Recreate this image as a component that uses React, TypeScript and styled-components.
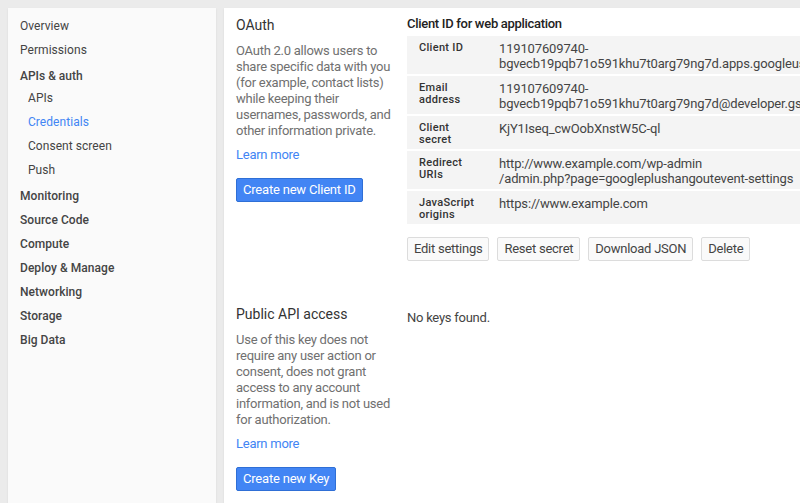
import React from "react";
import styled, { createGlobalStyle } from "styled-components";

const Global = createGlobalStyle`
  html, body { margin: 0; padding: 0; background: #ebebeb; overflow: hidden; }
  body { font-family: Roboto, "Liberation Sans", Arial, sans-serif; font-size: 13px; color: #444; }
  * { box-sizing: border-box; }
`;

const Page = styled.div`
  display: flex;
  gap: 8px;
  padding: 8px 0 0 8px;
  height: 503px;
  width: 800px;
  overflow: hidden;
`;

const Sidebar = styled.nav`
  width: 208px;
  flex: none;
  background: #fafafa;
  box-shadow: 0 1px 2px rgba(0, 0, 0, 0.08);
  padding-top: 6px;
`;

const NavItem = styled.div<{ $bold?: boolean; $sub?: boolean; $active?: boolean }>`
  height: 24px;
  line-height: 24px;
  padding-left: ${(p) => (p.$sub ? 20 : 12)}px;
  font-size: 12px;
  letter-spacing: 0.05px;
  font-weight: ${(p) => (p.$bold ? 500 : 400)};
  color: ${(p) => (p.$active ? "#4285f4" : "#444")};
  white-space: nowrap;
`;

const NavGroup = styled.div`
  margin: 2px 0;
`;

const NavHeader = styled.div`
  height: 22px;
  line-height: 20px;
  padding: 2px 0 0 12px;
  font-size: 12px;
  font-weight: 500;
  color: #444;
`;

const Main = styled.main`
  flex: 1;
  min-width: 0;
  background: #fff;
  box-shadow: 0 1px 2px rgba(0, 0, 0, 0.08);
  overflow: hidden;
  padding: 7px 0 0 12px;
`;

const Section = styled.section<{ $top?: number }>`
  display: grid;
  grid-template-columns: 160px 700px;
  column-gap: 11px;
  margin-top: ${(p) => p.$top ?? 0}px;
`;

const Intro = styled.div`
  display: flex;
  flex-direction: column;
  align-items: flex-start;
`;

const IntroTitle = styled.h2`
  margin: 0;
  font-size: 14px;
  line-height: 20px;
  font-weight: 400;
  color: #333;
`;

const IntroText = styled.p`
  margin: 8px 0 0;
  font-size: 13px;
  letter-spacing: -0.25px;
  line-height: 16px;
  color: #707070;
`;

const LearnMore = styled.a`
  margin-top: 8px;
  font-size: 13px;
  letter-spacing: -0.25px;
  line-height: 16px;
  color: #4285f4;
  text-decoration: none;
`;

const PrimaryButton = styled.button`
  margin-top: 15px;
  height: 24px;
  padding: 0 6px;
  border: 1px solid #2f6fd6;
  border-radius: 2px;
  background: #4285f4;
  color: #fff;
  font-family: inherit;
  font-size: 13px;
  letter-spacing: -0.2px;
  line-height: 22px;
`;

const Details = styled.div`
  padding-top: 1px;
`;

const DetailsTitle = styled.h3`
  margin: 0;
  font-size: 13px;
  letter-spacing: -0.3px;
  line-height: 16px;
  font-weight: 500;
  color: #222;
`;

const Table = styled.div`
  margin-top: 4px;
  display: flex;
  flex-direction: column;
  gap: 2px;
`;

const Row = styled.div`
  display: flex;
  align-items: flex-start;
  background: #f4f4f4;
  padding: 5px 12px 3px;
`;

const Label = styled.div`
  width: 80px;
  flex: none;
  margin-top: 1px;
  font-size: 11px;
  letter-spacing: 0.3px;
  line-height: 12px;
  font-weight: 500;
  color: #333;
`;

const Value = styled.div`
  font-size: 13px;
  letter-spacing: -0.15px;
  line-height: 15px;
  color: #444;
  white-space: nowrap;
`;

const Actions = styled.div`
  display: flex;
  gap: 8px;
  margin-top: 13px;
`;

const Button = styled.button`
  height: 24px;
  padding: 0 6px;
  border: 1px solid #dcdcdc;
  border-radius: 2px;
  background: #fafafa;
  color: #444;
  font-family: inherit;
  font-size: 13px;
  letter-spacing: -0.25px;
  line-height: 22px;
`;

const Empty = styled.div`
  padding-top: 5px;
  font-size: 13px;
  letter-spacing: -0.25px;
  line-height: 16px;
  color: #444;
`;

type Detail = { label: string[]; value: string[] };

const details: Detail[] = [
  {
    label: ["Client ID"],
    value: ["119107609740-", "bgvecb19pqb71o591khu7t0arg79ng7d.apps.googleusercontent.com"],
  },
  {
    label: ["Email", "address"],
    value: ["119107609740-", "bgvecb19pqb71o591khu7t0arg79ng7d@developer.gserviceaccount.com"],
  },
  { label: ["Client", "secret"], value: ["KjY1Iseq_cwOobXnstW5C-ql"] },
  {
    label: ["Redirect", "URIs"],
    value: ["http://www.example.com/wp-admin", "/admin.php?page=googleplushangoutevent-settings"],
  },
  { label: ["JavaScript", "origins"], value: ["https://www.example.com"] },
];

const Lines = ({ lines }: { lines: string[] }) => (
  <>
    {lines.map((l, i) => (
      <React.Fragment key={i}>
        {i > 0 && <br />}
        {l}
      </React.Fragment>
    ))}
  </>
);

export default function App() {
  return (
    <>
      <Global />
      <Page>
        <Sidebar>
          <NavItem>Overview</NavItem>
          <NavItem>Permissions</NavItem>
          <NavGroup>
            <NavHeader>APIs &amp; auth</NavHeader>
            <NavItem $sub>APIs</NavItem>
            <NavItem $sub $active>
              Credentials
            </NavItem>
            <NavItem $sub>Consent screen</NavItem>
            <NavItem $sub>Push</NavItem>
          </NavGroup>
          <NavItem $bold>Monitoring</NavItem>
          <NavItem $bold>Source Code</NavItem>
          <NavItem $bold>Compute</NavItem>
          <NavItem $bold>Deploy &amp; Manage</NavItem>
          <NavItem $bold>Networking</NavItem>
          <NavItem $bold>Storage</NavItem>
          <NavItem $bold>Big Data</NavItem>
        </Sidebar>
        <Main>
          <Section>
            <Intro>
              <IntroTitle>OAuth</IntroTitle>
              <IntroText>
                OAuth 2.0 allows users to share specific data with you (for example, contact lists)
                while keeping their usernames, passwords, and other information private.
              </IntroText>
              <LearnMore href="#">Learn more</LearnMore>
              <PrimaryButton>Create new Client ID</PrimaryButton>
            </Intro>
            <Details>
              <DetailsTitle>Client ID for web application</DetailsTitle>
              <Table>
                {details.map((d, i) => (
                  <Row key={i}>
                    <Label>
                      <Lines lines={d.label} />
                    </Label>
                    <Value>
                      <Lines lines={d.value} />
                    </Value>
                  </Row>
                ))}
              </Table>
              <Actions>
                <Button>Edit settings</Button>
                <Button>Reset secret</Button>
                <Button>Download JSON</Button>
                <Button>Delete</Button>
              </Actions>
            </Details>
          </Section>
          <Section $top={43}>
            <Intro>
              <IntroTitle>Public API access</IntroTitle>
              <IntroText>
                Use of this key does not require any user action or consent, does not grant access
                to any account information, and is not used for authorization.
              </IntroText>
              <LearnMore href="#">Learn more</LearnMore>
              <PrimaryButton>Create new Key</PrimaryButton>
            </Intro>
            <Details>
              <Empty>No keys found.</Empty>
            </Details>
          </Section>
        </Main>
      </Page>
    </>
  );
}
